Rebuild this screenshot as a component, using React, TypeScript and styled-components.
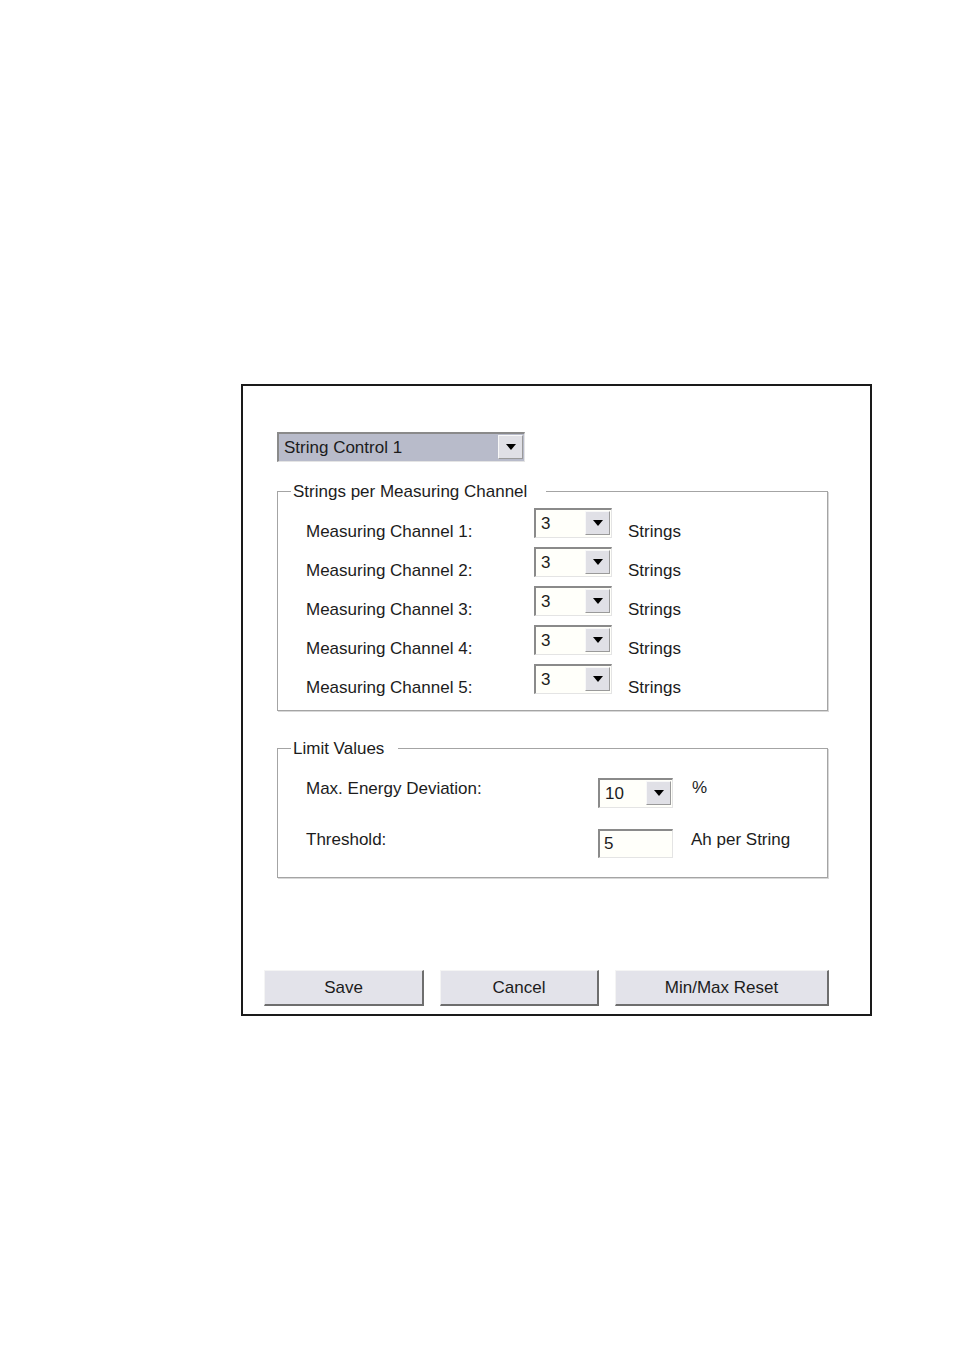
import React from "react";
import styled, { createGlobalStyle } from "styled-components";

const GlobalStyle = createGlobalStyle`
  html, body {
    margin: 0;
    padding: 0;
    background: #ffffff;
  }
  body {
    font-family: "Liberation Sans", Arial, sans-serif;
    font-size: 17px;
    color: #1c1c1c;
  }
`;

const Page = styled.div`
  width: 954px;
  height: 1351px;
  padding: 384px 0 0 241px;
  box-sizing: border-box;
`;

const Frame = styled.div`
  width: 631px;
  height: 632px;
  box-sizing: border-box;
  border: 2px solid #1a1a1a;
  padding-top: 46px;
  display: flex;
  flex-direction: column;
`;

const Content = styled.div`
  padding-left: 34px;
  width: 551px;
  display: flex;
  flex-direction: column;
`;

const Group = styled.fieldset<{ $top: number }>`
  margin: ${(p) => p.$top}px 0 0 0;
  padding: 0;
  border: 1px solid #a4a4a4;
  box-shadow: 1px 1px 0 #d8d8d8;
  min-width: 0;
`;

const Legend = styled.legend<{ $gap: number }>`
  margin-left: 13px;
  padding: 2px ${(p) => p.$gap}px 0 2px;
  line-height: 20px;
  color: #1c1c1c;
`;

const Rows = styled.div<{ $gap: number; $padTop: number; $padBottom: number }>`
  display: flex;
  flex-direction: column;
  gap: ${(p) => p.$gap}px;
  padding: ${(p) => p.$padTop}px 0 ${(p) => p.$padBottom}px 28px;
`;

const Row = styled.div<{ $height: number }>`
  display: flex;
  align-items: flex-start;
  height: ${(p) => p.$height}px;
`;

const Label = styled.span<{ $width: number; $drop: number }>`
  width: ${(p) => p.$width}px;
  flex: none;
  line-height: 20px;
  margin-top: ${(p) => p.$drop}px;
  white-space: nowrap;
`;

const Unit = styled.span<{ $gapLeft: number; $drop: number }>`
  margin-left: ${(p) => p.$gapLeft}px;
  line-height: 20px;
  margin-top: ${(p) => p.$drop}px;
  white-space: nowrap;
`;

const SelectBox = styled.div<{ $width: number; $height: number; $bg: string }>`
  width: ${(p) => p.$width}px;
  height: ${(p) => p.$height}px;
  box-sizing: border-box;
  flex: none;
  display: flex;
  border-top: 2px solid #8a8a8a;
  border-left: 2px solid #8a8a8a;
  border-bottom: 1px solid #e4e4e4;
  border-right: 1px solid #e4e4e4;
  background: ${(p) => p.$bg};
`;

const SelectValue = styled.div`
  flex: 1;
  padding-left: 5px;
  display: flex;
  align-items: center;
  line-height: 20px;
  white-space: nowrap;
  overflow: hidden;
`;

const ArrowButton = styled.div`
  width: 25px;
  flex: none;
  box-sizing: border-box;
  margin: 1px 1px 2px 0;
  background: #e0e0e6;
  border-top: 1px solid #f8f8f8;
  border-left: 1px solid #f8f8f8;
  border-right: 1px solid #9a9a9a;
  border-bottom: 1px solid #9a9a9a;
  display: flex;
  align-items: center;
  justify-content: center;
`;

const TextInput = styled.div`
  width: 75px;
  height: 29px;
  box-sizing: border-box;
  flex: none;
  border-top: 2px solid #8a8a8a;
  border-left: 2px solid #8a8a8a;
  border-bottom: 1px solid #e4e4e4;
  border-right: 1px solid #e4e4e4;
  background: #fffffa;
  padding-left: 4px;
  display: flex;
  align-items: center;
`;

const ButtonRow = styled.div`
  margin-top: 92px;
  margin-left: 21px;
  display: flex;
  gap: 16px;
`;

const Button = styled.button<{ $width: number }>`
  width: ${(p) => p.$width}px;
  height: 36px;
  box-sizing: border-box;
  background: #e3e3ea;
  border-top: 1px solid #f4f4f4;
  border-left: 1px solid #f4f4f4;
  border-right: 2px solid #6e6e6e;
  border-bottom: 2px solid #6e6e6e;
  font-family: "Liberation Sans", Arial, sans-serif;
  font-size: 17px;
  color: #1c1c1c;
  padding: 0;
  cursor: default;
`;

const Arrow = () => (
  <svg width="10" height="6" viewBox="0 0 10 6">
    <path d="M0 0H10L5 6Z" fill="#000" />
  </svg>
);

const Dropdown: React.FC<{ value: string; width: number; height?: number; bg?: string }> = ({
  value,
  width,
  height = 30,
  bg = "#fffffa",
}) => (
  <SelectBox $width={width} $height={height} $bg={bg}>
    <SelectValue>{value}</SelectValue>
    <ArrowButton>
      <Arrow />
    </ArrowButton>
  </SelectBox>
);

const channels = [1, 2, 3, 4, 5];

export default function App() {
  return (
    <>
      <GlobalStyle />
      <Page>
        <Frame>
          <Content>
            <Dropdown value="String Control 1" width={248} height={30} bg="#b8bbca" />

            <Group $top={18}>
              <Legend $gap={19}>Strings per Measuring Channel</Legend>
              <Rows $gap={9} $padTop={6} $padBottom={16}>
                {channels.map((n) => (
                  <Row key={n} $height={30}>
                    <Label $width={228} $drop={14}>
                      Measuring Channel {n}:
                    </Label>
                    <Dropdown value="3" width={78} />
                    <Unit $gapLeft={16} $drop={14}>
                      Strings
                    </Unit>
                  </Row>
                ))}
              </Rows>
            </Group>

            <Group $top={26}>
              <Legend $gap={14}>Limit Values</Legend>
              <Rows $gap={21} $padTop={19} $padBottom={19}>
                <Row $height={30}>
                  <Label $width={292} $drop={1}>
                    Max. Energy Deviation:
                  </Label>
                  <Dropdown value="10" width={75} />
                  <Unit $gapLeft={19} $drop={0}>
                    %
                  </Unit>
                </Row>
                <Row $height={29}>
                  <Label $width={292} $drop={1}>
                    Threshold:
                  </Label>
                  <TextInput>5</TextInput>
                  <Unit $gapLeft={18} $drop={1}>
                    Ah per String
                  </Unit>
                </Row>
              </Rows>
            </Group>
          </Content>

          <ButtonRow>
            <Button $width={160}>Save</Button>
            <Button $width={159}>Cancel</Button>
            <Button $width={214}>Min/Max Reset</Button>
          </ButtonRow>
        </Frame>
      </Page>
    </>
  );
}
